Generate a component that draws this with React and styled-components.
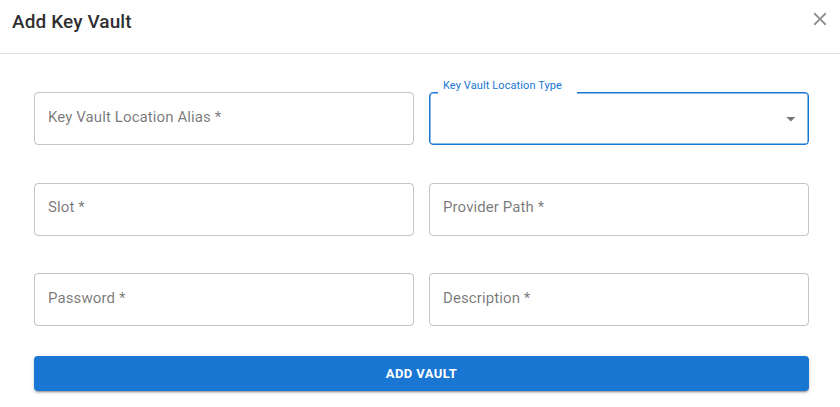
import React from "react";
import styled, { createGlobalStyle } from "styled-components";

const GlobalStyle = createGlobalStyle`
  html, body {
    margin: 0;
    padding: 0;
    background: #fff;
  }
  body {
    font-family: Roboto, "Liberation Sans", Arial, sans-serif;
    -webkit-font-smoothing: antialiased;
  }
`;

const Dialog = styled.div`
  width: 840px;
  height: 407px;
  background: #fff;
  overflow: hidden;
`;

const Header = styled.div`
  display: flex;
  justify-content: space-between;
  align-items: flex-start;
  height: 54px;
  padding: 0 9px 0 12px;
  box-sizing: border-box;
  border-bottom: 1px solid #e0e0e0;
`;

const Title = styled.h2`
  margin: 11px 0 0;
  font-size: 19px;
  font-weight: 500;
  line-height: 1.2;
  letter-spacing: 0.1px;
  color: rgba(0, 0, 0, 0.84);
`;

const CloseButton = styled.button`
  margin-top: 8px;
  padding: 0;
  border: 0;
  background: transparent;
  width: 22px;
  height: 22px;
  color: #8f8f8f;
  cursor: pointer;
  svg {
    display: block;
    width: 22px;
    height: 22px;
  }
`;

const Form = styled.form`
  display: flex;
  flex-direction: column;
  gap: 30px;
  padding: 38px 31px 0 34px;
`;

const Grid = styled.div`
  display: grid;
  grid-template-columns: 1fr 1fr;
  column-gap: 15px;
  row-gap: 37.5px;
`;

const Field = styled.div`
  position: relative;
  display: flex;
  align-items: center;
  height: 53px;
  box-sizing: border-box;
  padding: 0 6px 4px 13px;
  border: 1px solid ${(p) => (p.$focused ? "#1976d2" : "rgba(0, 0, 0, 0.23)")};
  box-shadow: ${(p) => (p.$focused ? "inset 0 0 0 0.5px #1976d2" : "none")};
  border-radius: 4px;
`;

const Placeholder = styled.span`
  flex: 1;
  font-size: 15px;
  color: rgba(0, 0, 0, 0.54);
  letter-spacing: 0.1px;
`;

const FloatLabel = styled.span`
  position: absolute;
  left: 8px;
  top: -15px;
  padding: 0 15px 0 5px;
  background: #fff;
  font-size: 11px;
  line-height: 16px;
  color: #1976d2;
  letter-spacing: 0.1px;
`;

const Arrow = styled.svg`
  width: 21.6px;
  height: 21.6px;
  margin-top: 4px;
  fill: rgba(0, 0, 0, 0.54);
`;

const SubmitButton = styled.button`
  height: 35px;
  border: 0;
  border-radius: 4px;
  background: #1976d2;
  color: #fff;
  font-family: Roboto, "Liberation Sans", Arial, sans-serif;
  font-size: 13px;
  font-weight: 700;
  letter-spacing: 0.4px;
  text-transform: uppercase;
  cursor: pointer;
  box-shadow: 0 3px 1px -2px rgba(0, 0, 0, 0.2), 0 2px 2px 0 rgba(0, 0, 0, 0.14),
    0 1px 5px 0 rgba(0, 0, 0, 0.12);
`;

function TextField({ label }) {
  return (
    <Field>
      <Placeholder>{label}</Placeholder>
    </Field>
  );
}

function SelectField({ label }) {
  return (
    <Field $focused>
      <FloatLabel>{label}</FloatLabel>
      <Placeholder />
      <Arrow viewBox="0 0 24 24">
        <path d="M7 10l5 5 5-5z" />
      </Arrow>
    </Field>
  );
}

export default function App() {
  return (
    <>
      <GlobalStyle />
      <Dialog>
        <Header>
          <Title>Add Key Vault</Title>
          <CloseButton type="button" aria-label="close">
            <svg viewBox="0 0 24 24" fill="currentColor">
              <path d="M19 6.41 17.59 5 12 10.59 6.41 5 5 6.41 10.59 12 5 17.59 6.41 19 12 13.41 17.59 19 19 17.59 13.41 12z" />
            </svg>
          </CloseButton>
        </Header>
        <Form onSubmit={(e) => e.preventDefault()}>
          <Grid>
            <TextField label="Key Vault Location Alias *" />
            <SelectField label="Key Vault Location Type" />
            <TextField label="Slot *" />
            <TextField label="Provider Path *" />
            <TextField label="Password *" />
            <TextField label="Description *" />
          </Grid>
          <SubmitButton type="submit">Add Vault</SubmitButton>
        </Form>
      </Dialog>
    </>
  );
}
